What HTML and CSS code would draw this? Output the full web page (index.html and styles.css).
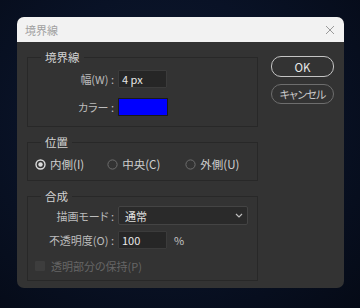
FILE: index.html
```html
<!DOCTYPE html>
<html lang="ja">
<head>
<meta charset="utf-8">
<link rel="stylesheet" href="styles.css">
</head>
<body>
<div class="dialog">
  <div class="titlebar">
    <span class="title">境界線</span>
    <svg class="close" width="10" height="10" viewBox="0 0 10 10"><path d="M1 1L9 9M9 1L1 9" stroke="#9a9a9a" stroke-width="1" fill="none"/></svg>
  </div>
  <div class="body">
    <div class="groups">
      <div class="group g1">
        <div class="legend">境界線</div>
        <div class="row r1">
          <span class="label">幅(W) :</span>
          <div class="input">4 px</div>
        </div>
        <div class="row r2">
          <span class="label">カラー :</span>
          <div class="swatch"></div>
        </div>
      </div>
      <div class="group g2">
        <div class="legend">位置</div>
        <div class="radios">
          <div class="radio on">
            <svg width="11" height="11" viewBox="0 0 11 11"><circle cx="5.5" cy="5.5" r="4.5" stroke="#dcdcdc" stroke-width="1.4" fill="none"/><circle cx="5.5" cy="5.5" r="2.2" fill="#dcdcdc"/></svg>
            <span>内側(I)</span>
          </div>
          <div class="radio">
            <svg width="11" height="11" viewBox="0 0 11 11"><circle cx="5.5" cy="5.5" r="4.6" stroke="#6e6e6e" stroke-width="1" fill="none"/></svg>
            <span>中央(C)</span>
          </div>
          <div class="radio">
            <svg width="11" height="11" viewBox="0 0 11 11"><circle cx="5.5" cy="5.5" r="4.6" stroke="#6e6e6e" stroke-width="1" fill="none"/></svg>
            <span>外側(U)</span>
          </div>
        </div>
      </div>
      <div class="group g3">
        <div class="legend">合成</div>
        <div class="row r3">
          <span class="label">描画モード :</span>
          <div class="select"><span>通常</span>
            <svg width="8" height="5" viewBox="0 0 8 5"><path d="M1 1L4 4L7 1" stroke="#bdbdbd" stroke-width="1.2" fill="none"/></svg>
          </div>
        </div>
        <div class="row r4">
          <span class="label">不透明度(O) :</span>
          <div class="input">100</div>
          <span class="pct">%</span>
        </div>
        <div class="check">
          <span class="box"></span>
          <span class="ctext">透明部分の保持(P)</span>
        </div>
      </div>
    </div>
    <div class="buttons">
      <div class="btn ok">OK</div>
      <div class="btn cancel">キャンセル</div>
    </div>
  </div>
</div>
</body>
</html>
```

FILE: styles.css
```css
* { box-sizing: border-box; }
html, body { margin: 0; padding: 0; }
body {
  width: 360px;
  height: 308px;
  overflow: hidden;
  background: radial-gradient(ellipse at 45% 40%, #0e1930 0%, #091226 50%, #050a16 100%);
  font-family: "Noto Sans CJK JP", "Noto Sans", sans-serif;
  font-size: 11px;
  font-feature-settings: "palt";
  color: #c0c0c0;
  padding: 17px 0 0 17px;
}
.dialog {
  width: 327px;
  height: 271px;
  background: #333333;
  border-radius: 7px;
  overflow: hidden;
  display: flex;
  flex-direction: column;
}
.titlebar {
  height: 25px;
  background: #f2f2f2;
  display: flex;
  align-items: center;
  justify-content: space-between;
  padding: 0 9px 0 8px;
}
.title {
  color: #a0a0a0;
  font-size: 11px;
  line-height: 14px;
  padding-top: 1px;
}
.body {
  display: flex;
  padding: 15px 0 0 10px;
}
.groups {
  width: 231px;
  display: flex;
  flex-direction: column;
  gap: 15px;
}
.group {
  border: 1px solid #282828;
}
.legend {
  margin: -9px 0 0 13px;
  padding: 0 4px;
  background: #333333;
  width: fit-content;
  font-size: 11.5px;
  line-height: 16px;
  color: #d2d2d2;
}
.g1 { height: 70px; }
.g2 { height: 39px; }
.g3 { height: 85px; }
.row {
  display: flex;
  align-items: center;
}
.label {
  width: 86px;
  margin-right: 4px;
  text-align: right;
  color: #bcbcbc;
  line-height: 14px;
  white-space: nowrap;
}
.r1 { margin-top: 5px; }
.r2 { margin-top: 10px; }
.input {
  width: 49px;
  height: 18px;
  background: #262626;
  border: 1px solid #3b3b3b;
  border-radius: 1px;
  color: #e8e8e8;
  line-height: 16px;
  padding-left: 3px;
}
.swatch {
  width: 50px;
  height: 18px;
  background: #0000ff;
  border: 1px solid #1a1a1a;
}
.radios {
  display: flex;
  margin-top: 7px;
  padding-left: 7px;
  line-height: 14px;
  font-size: 11.5px;
}
.radio {
  display: flex;
  align-items: center;
  gap: 4px;
  color: #cfcfcf;
}
.radio:nth-child(2) { margin-left: 23px; }
.radio:nth-child(3) { margin-left: 25px; }
.r3 { margin-top: 2px; }
.select {
  width: 130px;
  height: 19px;
  background: #2a2a2a;
  border: 1px solid #444;
  border-radius: 2px;
  display: flex;
  align-items: center;
  justify-content: space-between;
  padding: 0 4px 0 6px;
  color: #e0e0e0;
  line-height: 14px;
}
.r4 { margin-top: 6px; }
.pct { margin-left: 7px; color: #c4c4c4; }
.check {
  display: flex;
  align-items: center;
  margin-top: 10px;
  padding-left: 7px;
  gap: 6px;
}
.box {
  width: 10px;
  height: 10px;
  background: #3d3d3d;
  border-radius: 1px;
}
.ctext { color: #666; line-height: 14px; }
.buttons {
  margin-left: 13px;
  margin-top: -1px;
  display: flex;
  flex-direction: column;
  gap: 7px;
}
.btn {
  width: 63px;
  height: 20px;
  border-radius: 10px;
  display: flex;
  align-items: center;
  justify-content: center;
  line-height: 14px;
}
.ok {
  border: 1.5px solid #c4c4c4;
  color: #e8e8e8;
  height: 21px;
  font-size: 11.5px;
}
.cancel {
  border: 1px solid #6e6e6e;
  color: #c8c8c8;
  letter-spacing: -0.8px;
}
```
